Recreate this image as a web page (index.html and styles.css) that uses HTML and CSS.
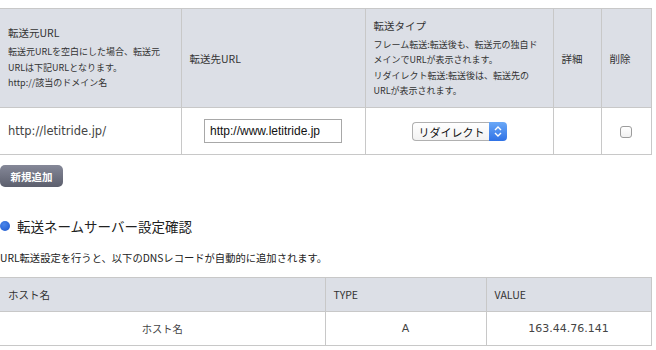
FILE: index.html
```html
<!DOCTYPE html>
<html>

<head>
  <title>URL転送設定</title>
  <meta charset="utf-8" />
  <meta name="viewport" content="width=device-width, initial-scale=1" />
  <link rel="stylesheet" href="styles.css">
</head>

<body>
  <div id="main">
    <table class="forward-table">
      <colgroup>
        <col class="w-source">
        <col class="w-dest">
        <col class="w-type">
        <col class="w-detail">
        <col class="w-delete">
      </colgroup>
      <thead>
        <tr>
          <th>
            <div class="th-title">転送元URL</div>
            <div class="th-note">転送元URLを空白にした場合、転送元<br>URLは下記URLとなります。<br>http://該当のドメイン名</div>
          </th>
          <th>転送先URL</th>
          <th>
            <div class="th-title">転送タイプ</div>
            <div class="th-note">フレーム転送:転送後も、転送元の独自ド<br>メインでURLが表示されます。<br>リダイレクト転送:転送後は、転送先の<br>URLが表示されます。</div>
          </th>
          <th>詳細</th>
          <th>削除</th>
        </tr>
      </thead>
      <tbody>
        <tr>
          <td class="cell-url">http://letitride.jp/</td>
          <td class="cell-center">
            <input type="text" class="url-input" value="http://www.letitride.jp" />
          </td>
          <td class="cell-center">
            <span class="select-box">
              <select class="type-select">
                <option>リダイレクト</option>
                <option>フレーム</option>
              </select>
              <span class="select-arrow">
                <svg width="18" height="19" viewBox="0 0 18 19">
                  <polyline points="6,8 9,5 12,8" fill="none" stroke="#fff" stroke-width="1.4" />
                  <polyline points="6,11 9,14 12,11" fill="none" stroke="#fff" stroke-width="1.4" />
                </svg>
              </span>
            </span>
          </td>
          <td></td>
          <td class="cell-center"><input type="checkbox" class="del-check" /></td>
        </tr>
      </tbody>
    </table>

    <button class="add-button">新規追加</button>

    <h2 class="section-title"><span class="dot"></span>転送ネームサーバー設定確認</h2>
    <p class="section-note">URL転送設定を行うと、以下のDNSレコードが自動的に追加されます。</p>

    <table class="dns-table">
      <colgroup>
        <col class="w-host">
        <col class="w-rtype">
        <col class="w-value">
      </colgroup>
      <thead>
        <tr>
          <th>ホスト名</th>
          <th>TYPE</th>
          <th>VALUE</th>
        </tr>
      </thead>
      <tbody>
        <tr>
          <td class="cell-ja">ホスト名</td>
          <td>A</td>
          <td>163.44.76.141</td>
        </tr>
      </tbody>
    </table>
  </div>
</body>

</html>
```

FILE: styles.css
```css
html,
body {
  background-color: #ffffff;
  color: #333333;
  margin: 0;
  padding: 0;
}

body {
  font-family: "DejaVu Sans", "Noto Sans CJK JP", sans-serif;
}

#main {
  padding: 8px 0 0 0;
  width: 651px;
}

table {
  border-collapse: collapse;
  table-layout: fixed;
  width: 651px;
}

th,
td {
  border: 1px solid #c8c8c8;
  padding: 0 8px;
}

th:first-child,
td:first-child {
  border-left: none;
}

th {
  background-color: #dcdfe6;
  font-family: "Noto Sans CJK JP", sans-serif;
  font-weight: normal;
  font-size: 10.5px;
  text-align: left;
  vertical-align: middle;
  color: #333333;
  white-space: nowrap;
}

/* forward table */
.w-source { width: 181px; }
.w-dest { width: 184px; }
.w-type { width: 188px; }
.w-detail { width: 48px; }
.w-delete { width: 50px; }

.forward-table thead th {
  height: 98px;
}

.forward-table tbody td {
  height: 46px;
}

.th-title {
  line-height: 15px;
  margin-bottom: 4px;
}

.th-note {
  font-size: 9px;
  line-height: 15.5px;
}

.cell-url {
  font-size: 11.5px;
  color: #444444;
}

.cell-center {
  text-align: center;
}

.url-input {
  width: 138px;
  height: 24px;
  box-sizing: border-box;
  border: 1px solid #a8a8a8;
  padding: 0 5px;
  margin: 0;
  font-family: "Liberation Sans", sans-serif;
  font-size: 12px;
  color: #111111;
  vertical-align: middle;
}

.url-input:focus {
  outline: none;
}

.select-box {
  display: inline-flex;
  vertical-align: middle;
  height: 19px;
}

.type-select {
  appearance: none;
  -webkit-appearance: none;
  width: 77px;
  height: 19px;
  box-sizing: border-box;
  margin: 0;
  padding: 0 0 0 6px;
  border: 1px solid #b0b0b0;
  border-right: none;
  border-radius: 4px 0 0 4px;
  background: linear-gradient(#ffffff, #f2f2f2);
  font-family: "Noto Sans CJK JP", sans-serif;
  font-size: 11px;
  color: #111111;
}

.select-arrow {
  display: block;
  width: 18px;
  height: 19px;
  border-radius: 0 4px 4px 0;
  background: linear-gradient(#6aa8f7, #2f72e6);
}

.select-arrow svg {
  display: block;
}

.del-check {
  appearance: none;
  -webkit-appearance: none;
  width: 12px;
  height: 12px;
  margin: 0;
  border: 1px solid #9c9c9c;
  border-radius: 3px;
  background: linear-gradient(#ffffff, #f0f0f0);
  vertical-align: middle;
}

.add-button {
  display: block;
  margin: 10px 0 0 0;
  width: 63px;
  height: 22px;
  padding: 0;
  border: none;
  border-radius: 5px;
  background: linear-gradient(#858898, #5c5f6d);
  color: #ffffff;
  font-family: "Noto Sans CJK JP", sans-serif;
  font-weight: bold;
  font-size: 10.5px;
  cursor: pointer;
}

.section-title {
  display: flex;
  align-items: center;
  margin: 29px 0 0 0;
  height: 20px;
  font-family: "Noto Sans CJK JP", sans-serif;
  font-weight: normal;
  font-size: 13.5px;
  color: #222222;
}

.dot {
  display: block;
  width: 10px;
  height: 10px;
  margin-right: 7px;
  border-radius: 50%;
  background: radial-gradient(circle at 40% 35%, #4a86ea, #1c56cc);
}

.section-note {
  margin: 14px 0 11px 0;
  line-height: 16px;
  font-family: "Noto Sans CJK JP", sans-serif;
  font-size: 10.3px;
  color: #222222;
}

/* dns table */
.w-host { width: 325px; }
.w-rtype { width: 161px; }
.w-value { width: 165px; }

.dns-table th,
.dns-table td {
  height: 33px;
}

.dns-table td {
  text-align: center;
  font-size: 11px;
  color: #444444;
}

.dns-table .cell-ja {
  font-family: "Noto Sans CJK JP", sans-serif;
  font-size: 10.3px;
}
```
